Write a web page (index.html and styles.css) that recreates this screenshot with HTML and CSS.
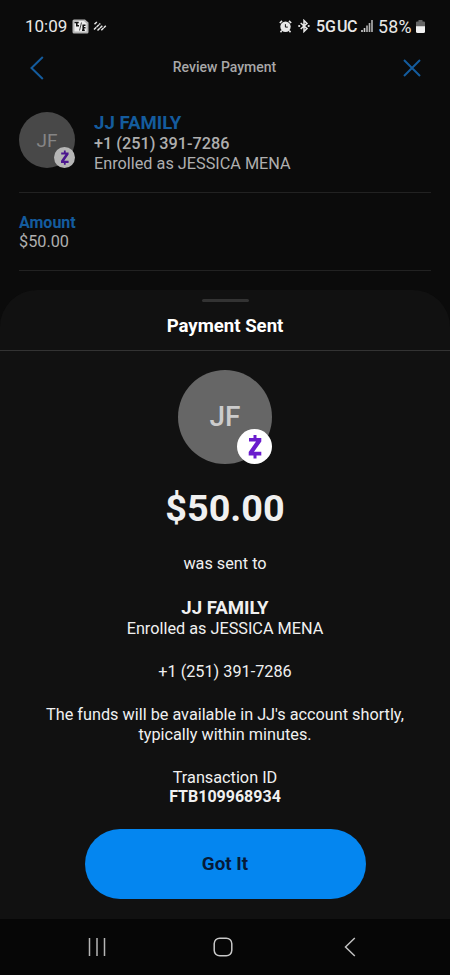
FILE: index.html
```
<!DOCTYPE html>
<html lang="en">
<head>
    <meta charset="UTF-8">
    <meta name="viewport" content="width=device-width, initial-scale=1.0">
    <title>Review Payment</title>
    <link rel="stylesheet" href="styles.css">
</head>
<body>
    <div class="phone">
        <div class="status-bar">
            <span class="clock">10:09</span>
            <svg class="news-icon" width="17" height="15" viewBox="0 0 17 15">
                <path d="M2 0.5h11l3.500 3V13a1.500 1.500 0 0 1-1.500 1.500H2A1.500 1.500 0 0 1 .5 13V2A1.500 1.500 0 0 1 2 .5z" fill="#b5b5b5"/>
                <path d="M2.500 2h9.500l2.500 2.500v8h-12z" fill="#efefef"/>
                <path d="M2.500 3.500h4.200M4.800 4v3.500M4.800 6.800h2.200M10.500 6.300h3M11.200 6v5.500M10.500 8.800h3M10 11.300h2.800" stroke="#111" stroke-width="1.600"/>
                <path d="M9.500 3.500L7.500 11.500" stroke="#444" stroke-width="1"/>
            </svg>
            <svg class="stripes-icon" width="14" height="12" viewBox="0 0 14 12">
                <path d="M1.500 4.300L4.200 1.700M1 9.500L7.300 3.500M4.500 10.500L9.300 5.700M8.300 10.300L12.800 5.700" stroke="#e4e4e4" stroke-width="1.500" stroke-dasharray="3.200 .4"/>
            </svg>
            <div class="status-right">
                <svg width="13" height="13" viewBox="0 0 13 13">
                    <circle cx="6.500" cy="6.800" r="5.200" fill="#e8e8e8"/>
                    <path d="M.8 3L3 .9M10 .9L12.200 3M2.800 10.600L1.500 12.200M10.200 10.600l1.300 1.600" stroke="#e8e8e8" stroke-width="1.600"/>
                    <path d="M6.400 4.200v2.900h2.400" stroke="#111" stroke-width="1" fill="none"/>
                </svg>
                <svg class="bluetooth" width="12" height="14" viewBox="0 0 12 14">
                    <path d="M2.700 4L9 9.600 6 12.500V1.500L9 4.400 2.700 10" stroke="#e8e8e8" stroke-width="1.500" fill="none"/>
                    <circle cx="1.200" cy="7" r="1.100" fill="#e8e8e8"/>
                    <circle cx="10.700" cy="7" r="1.100" fill="#e8e8e8"/>
                </svg>
                <span class="network">5G<span class="uc">UC</span></span>
                <svg class="signal" width="12" height="13" viewBox="0 0 12 13">
                    <path d="M1 10v2M3.500 8v4" stroke="#d0d0d0" stroke-width="1.600"/>
                    <path d="M6 5.500V12M8.500 3v9M11 0v12" stroke="#b5b5b5" stroke-width="1.600"/>
                </svg>
                <span class="percent">58%</span>
                <svg class="battery" width="9" height="13" viewBox="0 0 9 13">
                    <path d="M2.500 0h4v1.500H8A1 1 0 0 1 9 2.500V7H0V2.500A1 1 0 0 1 1 1.500h1.500z" fill="#666"/>
                    <path d="M0 6.200h9V11.500A1.500 1.500 0 0 1 7.500 13h-6A1.500 1.500 0 0 1 0 11.500z" fill="#f2f2f2"/>
                </svg>
            </div>
        </div>

        <header class="top-bar">
            <svg width="14" height="24" viewBox="0 0 14 24"><path d="M12.800 1L1.500 12l11.300 11" stroke="#145c9e" stroke-width="2" fill="none"/></svg>
            <h1>Review Payment</h1>
            <svg width="18" height="18" viewBox="0 0 18 18"><path d="M1 1l16 16M17 1L1 17" stroke="#145c9e" stroke-width="2"/></svg>
        </header>

        <section class="recipient">
            <div class="avatar small">
                <span>JF</span>
                <svg class="zelle" viewBox="0 0 35 35">
                    <circle cx="17.500" cy="17.500" r="17.500" fill="#b5b5b5"/>
                    <path d="M12 9h4.500V6h3v3h4.800v3.500L17 22.800h7.300v3.700h-4.800v3h-3v-3h-4.800v-3.500L19 12.600h-7z" fill="#4b168e"/>
                </svg>
            </div>
            <div class="recipient-info">
                <p class="name">JJ FAMILY</p>
                <p class="phone-number">+1 (251) 391-7286</p>
                <p class="enrolled">Enrolled as JESSICA MENA</p>
            </div>
        </section>

        <section class="amount-row">
            <p class="label">Amount</p>
            <p class="value">$50.00</p>
        </section>

        <main class="sheet">
            <div class="handle"></div>
            <h2>Payment Sent</h2>
            <div class="sheet-body">
                <div class="avatar large">
                    <span>JF</span>
                    <svg class="zelle" viewBox="0 0 35 35">
                        <circle cx="17.500" cy="17.500" r="17.500" fill="#fff"/>
                        <path d="M12 9h4.500V6h3v3h4.800v3.500L17 22.800h7.300v3.700h-4.800v3h-3v-3h-4.800v-3.500L19 12.600h-7z" fill="#6a1ccd"/>
                    </svg>
                </div>
                <p class="sent-amount">$50.00</p>
                <p class="sent-to">was sent to</p>
                <p class="sent-name">JJ FAMILY</p>
                <p class="sent-enrolled">Enrolled as JESSICA MENA</p>
                <p class="sent-phone">+1 (251) 391-7286</p>
                <p class="note">The funds will be available in JJ's account shortly,<br>typically within minutes.</p>
                <p class="transaction">Transaction ID</p>
                <p class="transaction-id">FTB109968934</p>
                <button class="got-it">Got It</button>
            </div>
        </main>

        <nav class="nav-bar">
            <svg width="18" height="20" viewBox="0 0 18 20"><path d="M1.500 1v18M9 1v18M16.500 1v18" stroke="#b5b5b5" stroke-width="1.500"/></svg>
            <svg class="home" width="20" height="20" viewBox="0 0 20 20"><rect x="1.200" y="1.200" width="17.600" height="17.600" rx="5.500" stroke="#c8c8c8" stroke-width="1.500" fill="none"/></svg>
            <svg width="12" height="20" viewBox="0 0 12 20"><path d="M10.800 1L1.500 10l9.300 9" stroke="#c0c0c0" stroke-width="1.500" fill="none"/></svg>
        </nav>
    </div>
</body>
</html>
```
FILE: styles.css
```
* {
    margin: 0;
    padding: 0;
    box-sizing: border-box;
}

body {
    font-family: Roboto, "Liberation Sans", sans-serif;
    font-size: 16.250px;
    background-color: #0b0b0b;
    color: #f0f0f0;
}

svg {
    display: block;
    flex-shrink: 0;
}

.phone {
    display: flex;
    flex-direction: column;
    width: 450px;
    height: 975px;
    overflow: hidden;
}

/* Status bar */
.status-bar {
    display: flex;
    align-items: center;
    height: 52px;
    padding: 0 25px;
    color: #e8e8e8;
}

.clock {
    width: 42px;
    font-size: 17px;
    white-space: nowrap;
}

.news-icon {
    margin-left: 5px;
}

.stripes-icon {
    margin-left: 4px;
}

.status-right {
    display: flex;
    align-items: center;
    margin-left: auto;
}

.bluetooth {
    margin-left: 6px;
}

.network {
    width: 40px;
    margin-left: 6px;
    font-size: 16px;
    font-weight: 500;
    white-space: nowrap;
}

.uc {
    margin-left: 1px;
    letter-spacing: -0.5px;
}

.signal {
    margin-left: 5px;
}

.percent {
    width: 36px;
    margin-left: 5px;
    font-size: 17.800px;
    letter-spacing: 0.2px;
}

.battery {
    margin-left: 2px;
}

/* Dimmed review page */
.top-bar {
    display: flex;
    align-items: center;
    justify-content: space-between;
    height: 31px;
    padding: 0 29px 0 30px;
}

.top-bar h1 {
    padding: 0 0 2px 2px;
    font-size: 14px;
    font-weight: 500;
    color: #a8a8a8;
}

.recipient {
    display: flex;
    height: 110px;
    margin: 0 19px;
    padding-top: 29px;
    border-bottom: 1px solid #222;
}

.avatar {
    position: relative;
    display: flex;
    align-items: center;
    justify-content: center;
    border-radius: 50%;
}

.avatar .zelle {
    position: absolute;
    right: 0;
    bottom: 0;
}

.small {
    width: 56px;
    height: 56px;
    background-color: #484848;
    color: #858585;
    font-size: 19px;
}

.small .zelle {
    width: 21px;
    height: 21px;
}

.recipient-info {
    margin-left: 19px;
    color: #afafaf;
}

.name,
.label {
    font-weight: 700;
    color: #145c9e;
}

.name {
    font-size: 18.600px;
    line-height: 22px;
}

.phone-number {
    font-weight: 500;
    line-height: 20px;
}

.enrolled {
    line-height: 19px;
}

.amount-row {
    height: 78px;
    margin: 0 19px;
    padding-top: 20px;
    border-bottom: 1px solid #222;
    line-height: 19px;
}

.label {
    font-size: 16px;
}

.value {
    color: #afafaf;
}

/* Bottom sheet */
.sheet {
    height: 629px;
    margin-top: 19px;
    padding-top: 9px;
    background-color: #111;
    border-radius: 37px 37px 0 0;
}

.handle {
    width: 47px;
    height: 3px;
    margin: 0 auto;
    border-radius: 2px;
    background-color: #333;
}

.sheet h2 {
    height: 49px;
    padding-top: 13px;
    border-bottom: 1px solid #333;
    font-size: 18.600px;
    font-weight: 700;
    line-height: 22px;
    text-align: center;
    color: #fff;
}

.sheet-body {
    display: flex;
    flex-direction: column;
    align-items: center;
    padding-top: 18.500px;
    text-align: center;
    line-height: 19.500px;
}

.large {
    width: 94px;
    height: 94px;
    background-color: #666;
    color: #ccc;
    font-size: 28px;
    font-weight: 500;
}

.large .zelle {
    width: 35px;
    height: 35px;
}

.sent-amount {
    margin-top: 22.500px;
    font-size: 37.800px;
    font-weight: 700;
    line-height: 44px;
}

.sent-to {
    margin-top: 23.500px;
}

.sent-name {
    margin-top: 24px;
    font-size: 18.600px;
    font-weight: 700;
    line-height: 22px;
}

.sent-phone {
    margin-top: 23.500px;
}

.note {
    margin-top: 23.500px;
}

.transaction {
    margin-top: 23.500px;
}

.transaction-id {
    font-size: 16px;
    font-weight: 700;
}

.got-it {
    width: 281px;
    height: 70px;
    margin-top: 22.500px;
    border: none;
    border-radius: 35px;
    background-color: #0486f0;
    color: #061a38;
    font-family: inherit;
    font-size: 18.800px;
    font-weight: 700;
    cursor: pointer;
}

/* Android navigation */
.nav-bar {
    display: flex;
    align-items: center;
    justify-content: space-between;
    height: 56px;
    padding: 0 94px 0 88px;
    background-color: #060606;
}

.home {
    margin-right: 4px;
}
```
